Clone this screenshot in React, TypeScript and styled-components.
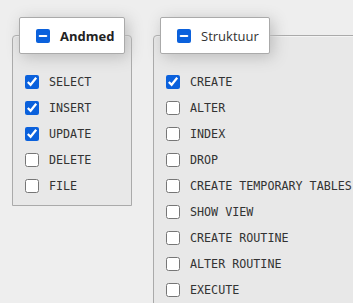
import React from "react";
import styled, { createGlobalStyle } from "styled-components";

const GlobalStyle = createGlobalStyle`
  html, body {
    margin: 0;
    padding: 0;
    background: #eeeeee;
    overflow: hidden;
  }
  body {
    font-family: "Open Sans", "Noto Sans", sans-serif;
    color: #333;
  }
`;

type Group = {
  title: string;
  bold?: boolean;
  items: { name: string; checked: boolean }[];
};

const groups: Group[] = [
  {
    title: "Andmed",
    bold: true,
    items: [
      { name: "SELECT", checked: true },
      { name: "INSERT", checked: true },
      { name: "UPDATE", checked: true },
      { name: "DELETE", checked: false },
      { name: "FILE", checked: false },
    ],
  },
  {
    title: "Struktuur",
    items: [
      { name: "CREATE", checked: true },
      { name: "ALTER", checked: false },
      { name: "INDEX", checked: false },
      { name: "DROP", checked: false },
      { name: "CREATE TEMPORARY TABLES", checked: false },
      { name: "SHOW VIEW", checked: false },
      { name: "CREATE ROUTINE", checked: false },
      { name: "ALTER ROUTINE", checked: false },
      { name: "EXECUTE", checked: false },
    ],
  },
];

function GroupToggle() {
  const ref = React.useRef<HTMLInputElement>(null);
  React.useEffect(() => {
    if (ref.current) ref.current.indeterminate = true;
  }, []);
  return <Check ref={ref} type="checkbox" readOnly />;
}

export default function App() {
  return (
    <Page>
      <GlobalStyle />
      {groups.map((group) => (
        <Fieldset key={group.title} $wide={group.items.length > 5}>
          <Legend>
            <GroupToggle />
            <LegendText $bold={group.bold}>{group.title}</LegendText>
          </Legend>
          <List>
            {group.items.map((item) => (
              <Row key={item.name}>
                <Check type="checkbox" defaultChecked={item.checked} />
                <Code>{item.name}</Code>
              </Row>
            ))}
          </List>
        </Fieldset>
      ))}
    </Page>
  );
}

const Page = styled.div`
  height: 303px;
  width: 353px;
  overflow: hidden;
  box-sizing: border-box;
  padding: 17px 0 0 12px;
  display: flex;
  align-items: flex-start;
  gap: 21px;
`;

const Fieldset = styled.fieldset<{ $wide?: boolean }>`
  margin: 0;
  box-sizing: border-box;
  flex-shrink: 0;
  width: ${(p) => (p.$wide ? "260px" : "120px")};
  min-width: 0;
  min-height: ${(p) => (p.$wide ? "320px" : "auto")};
  padding: 0 12px 6px 12px;
  border: 1px solid #aaa;
  border-radius: 4px 4px 0 0;
  background: #e8e8e8;
  box-shadow: inset 0 1px 0 #f4f4f4;
`;

const Legend = styled.legend`
  margin-left: -6px;
  box-sizing: border-box;
  height: 37px;
  display: flex;
  align-items: center;
  gap: 10px;
  padding: 0 10px 0 16px;
  background: #fff;
  border: 1px solid #aaa;
  border-radius: 2px;
  box-shadow: 3px 3px 15px #bbb;
`;

const LegendText = styled.span<{ $bold?: boolean }>`
  font-size: 13px;
  font-weight: ${(p) => (p.$bold ? 700 : 500)};
  color: ${(p) => (p.$bold ? "#222" : "#333")};
  white-space: nowrap;
`;

const List = styled.div`
  display: flex;
  flex-direction: column;
  padding-top: 15px;
`;

const Row = styled.label`
  height: 26px;
  display: flex;
  align-items: center;
  gap: 10px;
  white-space: nowrap;
`;

const Check = styled.input`
  margin: 0;
  width: 14px;
  height: 14px;
  flex-shrink: 0;
  accent-color: #0b61dc;
`;

const Code = styled.span`
  font-family: "DejaVu Sans Mono", "Liberation Mono", monospace;
  font-size: 11.7px;
  color: #333;
`;
